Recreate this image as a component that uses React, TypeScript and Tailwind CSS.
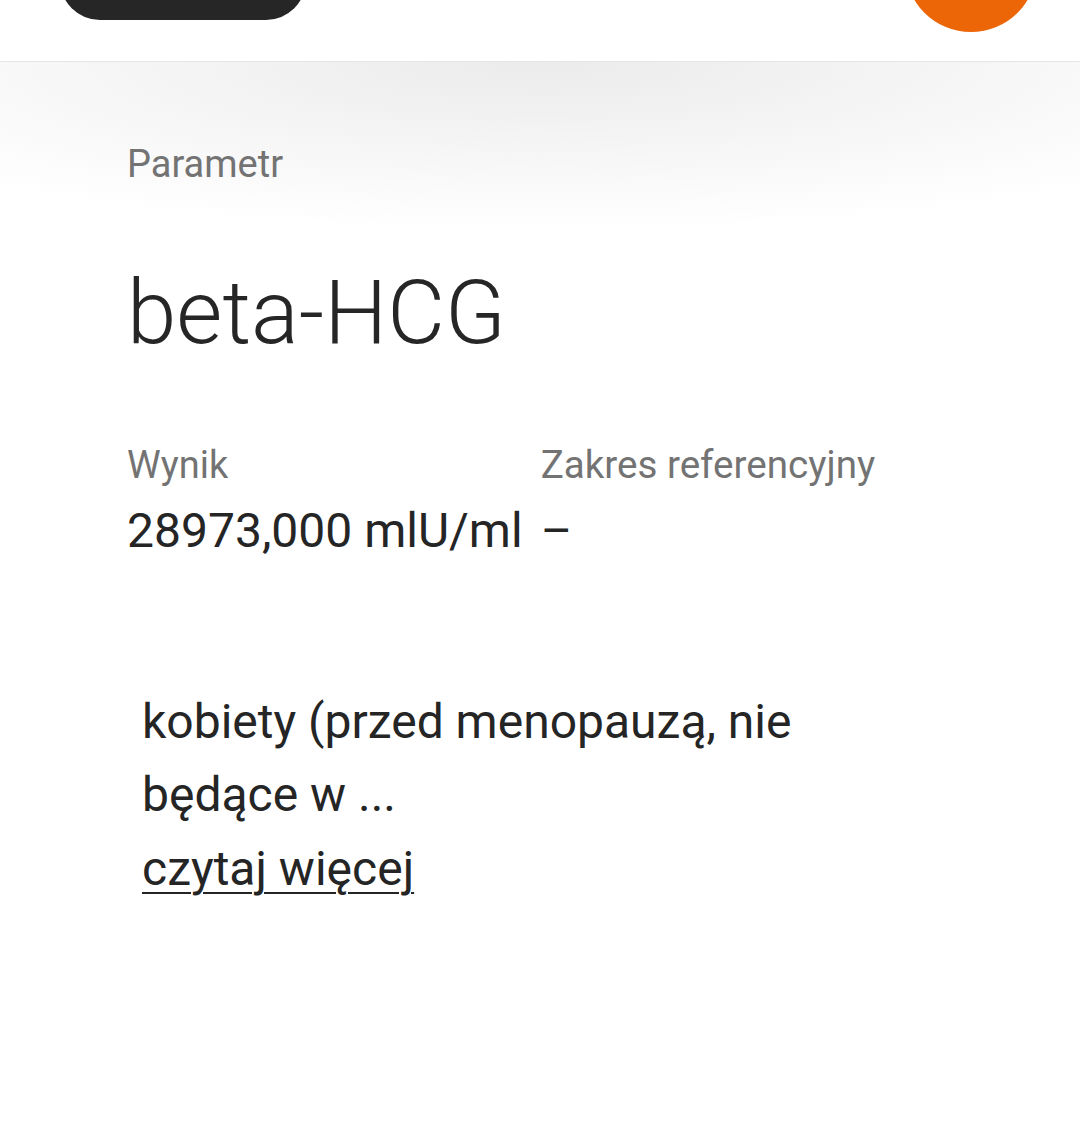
export default function App() {
  return (
    <div className="min-h-[1128px] w-full bg-white font-['Roboto',sans-serif] text-[#252525]">
      {/* top bar, cut off by the viewport */}
      <header className="flex h-[62px] items-start justify-between overflow-hidden border-b border-[#e6e6e6] bg-white pl-[60px] pr-[43px]">
        <div className="mt-[-60px] h-[80px] w-[246px] rounded-[40px] bg-[#262626]" />
        <div className="mt-[-100px] h-[132px] w-[132px] rounded-full bg-[#ec6608]" />
      </header>

      <main className="bg-[radial-gradient(ellipse_75%_170px_at_50%_0,#ebebeb,#ffffff)] px-[127px] pt-[78px]">
        <div className="text-[38px] leading-[48px] text-[#737373]">Parametr</div>

        <h1 className="mt-[75px] text-[89px] font-light leading-[100px] text-[#262626]">
          beta-HCG
        </h1>

        <div className="mt-[78px] flex gap-[18px]">
          <div className="flex flex-col">
            <span className="text-[38px] leading-[48px] text-[#737373]">Wynik</span>
            <span className="mt-[14px] whitespace-nowrap text-[48px] leading-[56px]">
              28973,000 mlU/ml
            </span>
          </div>
          <div className="flex flex-col">
            <span className="text-[38.6px] leading-[48px] text-[#737373]">
              Zakres referencyjny
            </span>
            <span className="mt-[14px] text-[48px] leading-[56px]">–</span>
          </div>
        </div>

        <div className="mt-[126px] pl-[15px] text-[48px] leading-[73px]">
          <p className="max-w-[700px]">kobiety (przed menopauzą, nie będące w ...</p>
          <a className="block leading-[75px] underline decoration-2 underline-offset-[7px]">
            czytaj więcej
          </a>
        </div>
      </main>
    </div>
  );
}
